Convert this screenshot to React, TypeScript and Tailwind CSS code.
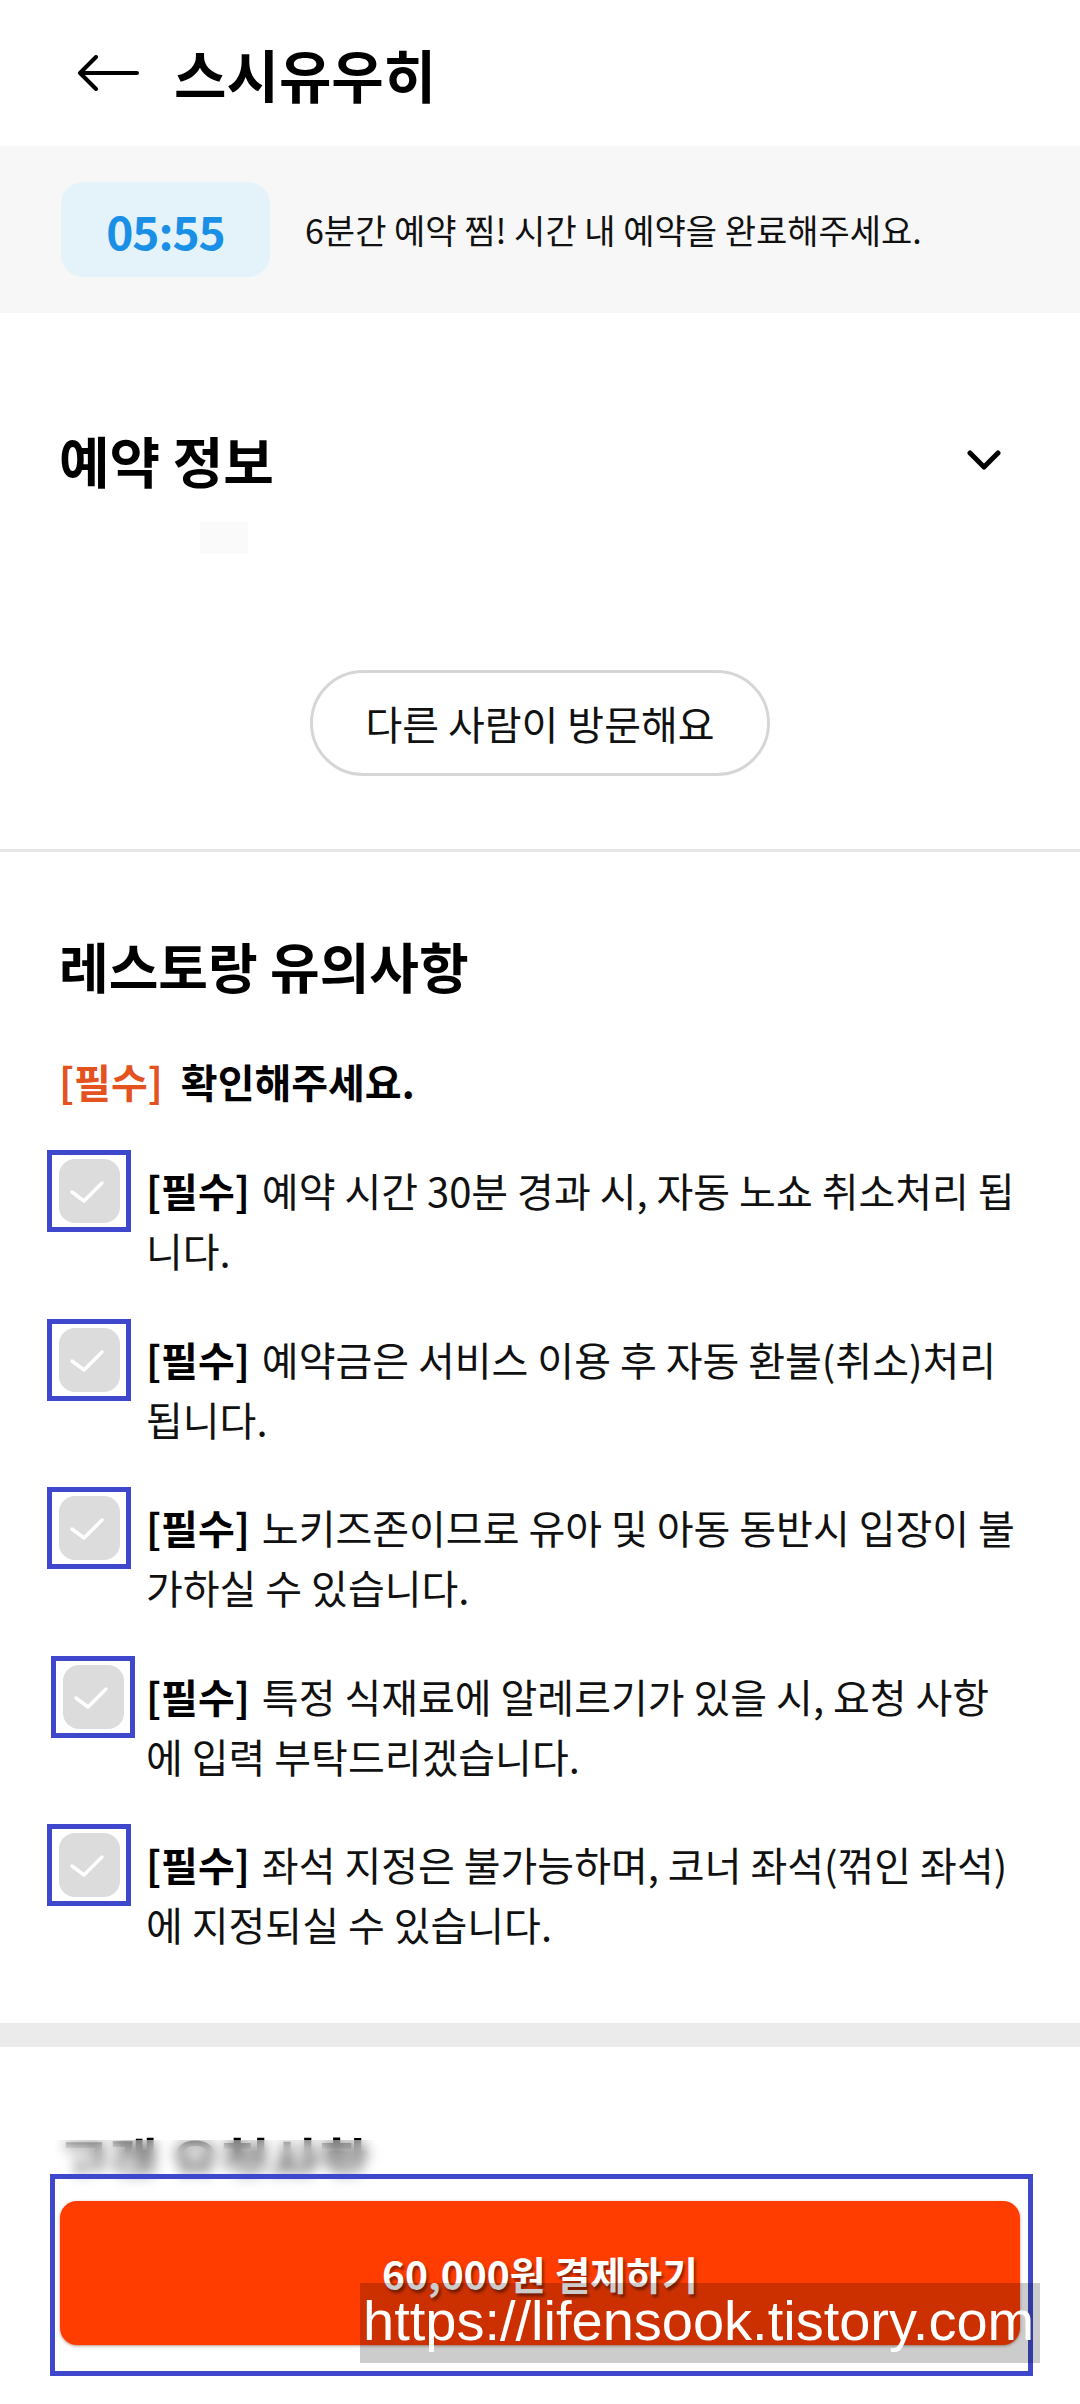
import React from "react";

type Notice = {
  first: string;
  second: string;
  boxClass?: string;
};

const notices: Notice[] = [
  { first: "예약 시간 30분 경과 시, 자동 노쇼 취소처리 됩", second: "니다." },
  { first: "예약금은 서비스 이용 후 자동 환불(취소)처리", second: "됩니다." },
  { first: "노키즈존이므로 유아 및 아동 동반시 입장이 불", second: "가하실 수 있습니다." },
  {
    first: "특정 식재료에 알레르기가 있을 시, 요청 사항",
    second: "에 입력 부탁드리겠습니다.",
    boxClass: "translate-x-[4px] w-[80px]",
  },
  { first: "좌석 지정은 불가능하며, 코너 좌석(꺾인 좌석)", second: "에 지정되실 수 있습니다." },
];

function BackArrow() {
  return (
    <svg width="62" height="36" viewBox="0 0 62 36" fill="none">
      <path
        d="M3 18 H60 M19 2 L3 18 L19 34"
        stroke="#000"
        strokeWidth="4"
        strokeLinecap="round"
        strokeLinejoin="round"
      />
    </svg>
  );
}

function ChevronDown() {
  return (
    <svg width="36" height="22" viewBox="0 0 36 22" fill="none">
      <path
        d="M5 4 L19 18 L33 4"
        stroke="#000"
        strokeWidth="5"
        strokeLinecap="round"
        strokeLinejoin="round"
      />
    </svg>
  );
}

function CheckBox({ className = "" }: { className?: string }) {
  // blue frame is the annotation drawn over the screenshot
  return (
    <div
      className={`-mt-[10px] flex h-[82px] w-[84px] flex-none items-center justify-center border-[5px] border-[#3f48cc] ${className}`}
    >
      <div className="flex h-[64px] w-[61px] items-center justify-center rounded-[16px] bg-[#dcdcdc]">
        <svg width="61" height="64" viewBox="0 0 61 64" fill="none">
          <path
            d="M13 33 L25 42 L43 24"
            stroke="#fff"
            strokeWidth="3.5"
            strokeLinecap="round"
            strokeLinejoin="round"
          />
        </svg>
      </div>
    </div>
  );
}

export default function App() {
  return (
    <div
      className="relative h-[2404px] w-[1080px] overflow-hidden bg-white text-[#111]"
      style={{ fontFamily: '"Noto Sans CJK KR", "Noto Sans", sans-serif' }}
    >
      {/* header */}
      <header className="flex h-[146px] items-center gap-[35px] pl-[77px]">
        <BackArrow />
        <h1 className="text-[57px] font-bold leading-none text-black">스시유우히</h1>
      </header>

      {/* hold timer */}
      <section className="flex h-[167px] items-center gap-[35px] bg-[#f7f7f7] px-[61px]">
        <div className="flex h-[95px] w-[209px] items-center justify-center rounded-[22px] bg-[#e4f2fa]">
          <span className="text-[46px] font-bold leading-none tracking-[-1px] text-[#1a8fe6]">
            05:55
          </span>
        </div>
        <p className="text-[34px] leading-none">6분간 예약 찜! 시간 내 예약을 완료해주세요.</p>
      </section>

      {/* reservation info */}
      <section className="border-b-[3px] border-[#e6e6e6] pb-[73px] pt-[119px]">
        <div className="flex items-center justify-between pl-[59px] pr-[79px]">
          <h2 className="text-[55px] font-bold leading-none text-black">예약 정보</h2>
          <ChevronDown />
        </div>
        <div className="ml-[200px] mt-[35px] h-[32px] w-[48px] bg-[#fafafa]" />
        <button className="mx-auto mt-[116px] flex h-[106px] w-[460px] items-center justify-center rounded-full border-[3px] border-[#d6d6d6] bg-white text-[40px] leading-none text-[#111]">
          다른 사람이 방문해요
        </button>
      </section>

      {/* restaurant notices */}
      <section className="pb-[69px] pt-[87px]">
        <h2 className="pl-[59px] text-[54px] font-bold leading-none text-black">레스토랑 유의사항</h2>
        <p className="mt-[68px] flex pl-[59px] text-[40px] font-bold leading-none text-black">
          <span className="text-[#e4521f]">[필수]</span>
          <span className="ml-[18px]">확인해주세요.</span>
        </p>
        <ul className="mt-[59px] flex flex-col gap-[48.5px] pl-[47px]">
          {notices.map((n) => (
            <li key={n.first} className="flex items-start gap-[15px]">
              <CheckBox className={n.boxClass} />
              <div className="text-[40px] leading-[60px]">
                <div className="flex whitespace-nowrap">
                  <span className="mr-[12px] font-bold text-black">[필수]</span>
                  <span>{n.first}</span>
                </div>
                <div className="whitespace-nowrap">{n.second}</div>
              </div>
            </li>
          ))}
        </ul>
      </section>

      <div className="h-[24px] bg-[#ebebeb]" />

      {/* customer requests (blurred in the capture) */}
      <section className="pt-[87px]">
        <h2 className="pl-[59px] text-[54px] font-bold leading-none text-black">고객 요청사항</h2>
      </section>

      {/* sticky pay bar */}
      <div className="absolute bottom-0 left-0 right-0 h-[230px] bg-white px-[60px] pt-[27px]">
        <button className="flex h-[144px] w-full items-center justify-center rounded-[17px] bg-[#ff3d00] text-[39px] font-bold leading-none text-white shadow-[0_1px_3px_rgba(120,40,0,0.5)] [text-shadow:2px_3px_3px_rgba(0,0,0,0.45)]">
          60,000원 결제하기
        </button>
      </div>

      {/* privacy blur + annotation frame added over the capture */}
      <div className="absolute left-[55px] top-[2140px] z-10 h-[50px] w-[330px] bg-white/40 backdrop-blur-[7px]" />
      <div className="pointer-events-none absolute left-[50px] top-[2174px] z-20 h-[202px] w-[983px] border-[5px] border-[#3f48cc]" />

      {/* blog watermark */}
      <div
        className="absolute left-[360px] top-[2283px] z-30 h-[80px] w-[680px] bg-black/20 pl-[3px] pt-[10px] text-[56px] leading-none text-white"
        style={{ fontFamily: '"Liberation Sans", Arial, sans-serif' }}
      >
        https://lifensook.tistory.com
      </div>
    </div>
  );
}
